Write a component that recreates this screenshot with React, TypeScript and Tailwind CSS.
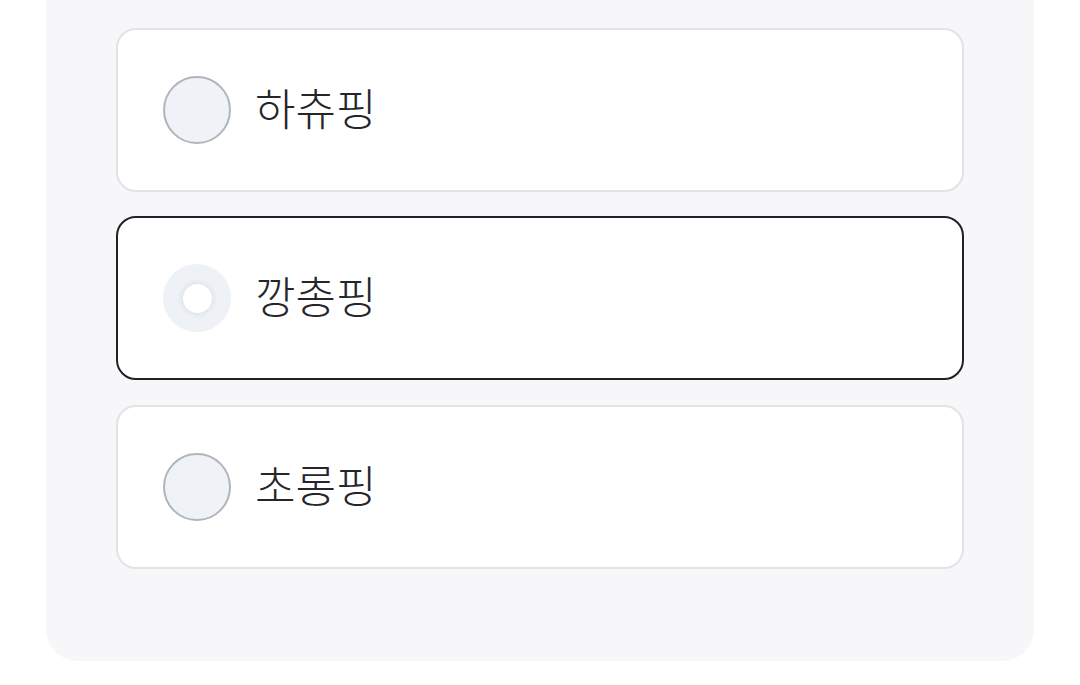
import { useState } from "react";

const OPTIONS = ["하츄핑", "깡총핑", "초롱핑"];

function Radio({ checked }: { checked: boolean }) {
  if (checked) {
    return (
      <span className="flex h-[68px] w-[68px] shrink-0 items-center justify-center rounded-full bg-[#eef1f6]">
        <span className="h-[29px] w-[29px] rounded-full bg-white shadow-[0_0_6px_rgba(60,70,90,0.14)]" />
      </span>
    );
  }
  return <span className="h-[68px] w-[68px] shrink-0 rounded-full border-2 border-[#b0b5bc] bg-[#eff2f7]" />;
}

export default function App() {
  const [selected, setSelected] = useState(1);

  return (
    <div className="min-h-[685px] bg-white px-[46px] font-['Noto_Sans_CJK_KR','Noto_Sans',sans-serif]">
      <div className="flex flex-col gap-[24.5px] rounded-b-[32px] bg-[#f7f7f9] px-[70px] pb-[92px] pt-[27.5px]">
        {OPTIONS.map((label, i) => (
          <button
            key={label}
            type="button"
            onClick={() => setSelected(i)}
            className={
              "flex h-[164px] items-center gap-[24px] rounded-[20px] border-2 bg-white pl-[45px] text-left " +
              (selected === i ? "border-[#222226]" : "border-[#e3e3e7]")
            }
          >
            <Radio checked={selected === i} />
            <span className="mb-[6px] text-[44px] font-light leading-none text-[#26262a]">{label}</span>
          </button>
        ))}
      </div>
    </div>
  );
}
